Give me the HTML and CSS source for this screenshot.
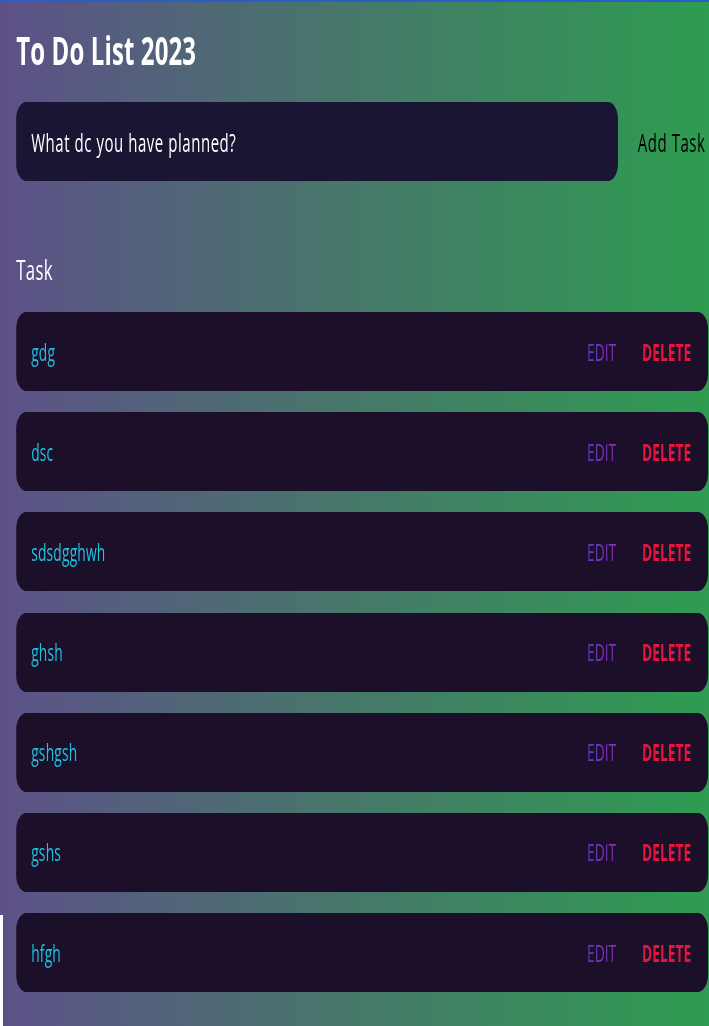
FILE: index.html
```html
<!DOCTYPE html>
<html>
<head>
<meta charset="utf-8">
<link rel="stylesheet" href="styles.css">
</head>
<body>
<div class="topline"></div>
<div class="stage">
  <div class="app">
    <h1 class="title">To Do List 2023</h1>
    <form class="new-task">
      <div class="input">What dc you have planned?</div>
      <div class="add">Add Task</div>
    </form>
    <h2 class="heading">Task</h2>
    <div class="tasks">
      <div class="task"><span class="text">gdg</span><span class="actions"><span class="edit">EDIT</span><span class="delete">DELETE</span></span></div>
      <div class="task"><span class="text">dsc</span><span class="actions"><span class="edit">EDIT</span><span class="delete">DELETE</span></span></div>
      <div class="task"><span class="text">sdsdgghwh</span><span class="actions"><span class="edit">EDIT</span><span class="delete">DELETE</span></span></div>
      <div class="task"><span class="text">ghsh</span><span class="actions"><span class="edit">EDIT</span><span class="delete">DELETE</span></span></div>
      <div class="task"><span class="text">gshgsh</span><span class="actions"><span class="edit">EDIT</span><span class="delete">DELETE</span></span></div>
      <div class="task"><span class="text">gshs</span><span class="actions"><span class="edit">EDIT</span><span class="delete">DELETE</span></span></div>
      <div class="task"><span class="text">hfgh</span><span class="actions"><span class="edit">EDIT</span><span class="delete">DELETE</span></span></div>
    </div>
  </div>
</div>
<div class="edge-strip"></div>
</body>
</html>
```
FILE: styles.css
```css
html, body {
  margin: 0;
  padding: 0;
  height: 100%;
  overflow: hidden;
}
body {
  position: relative;
  background: linear-gradient(90deg, #5d5188 0%, #467869 50%, #2e9c51 100%);
  font-family: "Open Sans", "Noto Sans", sans-serif;
  color: #fff;
}
.topline {
  height: 2px;
  background: #2b5ec4;
}
.stage {
  width: 709px;
  overflow: hidden;
}
/* the whole UI is horizontally condensed in the reference */
.app {
  width: 1182px;
  box-sizing: border-box;
  padding-left: 27px;
  transform: scaleX(0.6);
  transform-origin: 0 0;
}
.title {
  margin: 0;
  padding-top: 21px;
  font-size: 40px;
  font-weight: 700;
  line-height: 54px;
  letter-spacing: 0.2px;
}
.new-task {
  display: flex;
  align-items: center;
  margin: 25px 0 0 0;
  gap: 33px;
}
.input {
  width: 1003px;
  height: 79px;
  box-sizing: border-box;
  padding-left: 25px;
  display: flex;
  align-items: center;
  background: #1a1533;
  border-radius: 17px;
  font-size: 25px;
  letter-spacing: 0.9px;
  color: #fff;
}
.add {
  font-size: 25px;
  letter-spacing: 0.9px;
  color: #000;
  white-space: nowrap;
}
.heading {
  margin: 69px 0 0 0;
  font-size: 28px;
  font-weight: 400;
  line-height: 38px;
  letter-spacing: 0.5px;
}
.tasks {
  margin-top: 24px;
  display: flex;
  flex-direction: column;
  gap: 21.2px;
}
.task {
  height: 79px;
  width: 1153px;
  box-sizing: border-box;
  background: #1c0f2a;
  border-radius: 17px;
  display: flex;
  align-items: center;
  justify-content: space-between;
  padding: 0 28px 0 25px;
  font-size: 23px;
}
.text {
  color: #1fc3e2;
  letter-spacing: 0.3px;
}
.actions {
  display: flex;
  gap: 43px;
}
.edit {
  background: linear-gradient(90deg, #5a40c6, #8d2bb0);
  -webkit-background-clip: text;
  background-clip: text;
  color: transparent;
}
.delete {
  color: #e3163e;
  font-weight: 700;
}
.edge-strip {
  position: absolute;
  left: 0;
  top: 915px;
  bottom: 0;
  width: 3px;
  background: #fff;
}
```
